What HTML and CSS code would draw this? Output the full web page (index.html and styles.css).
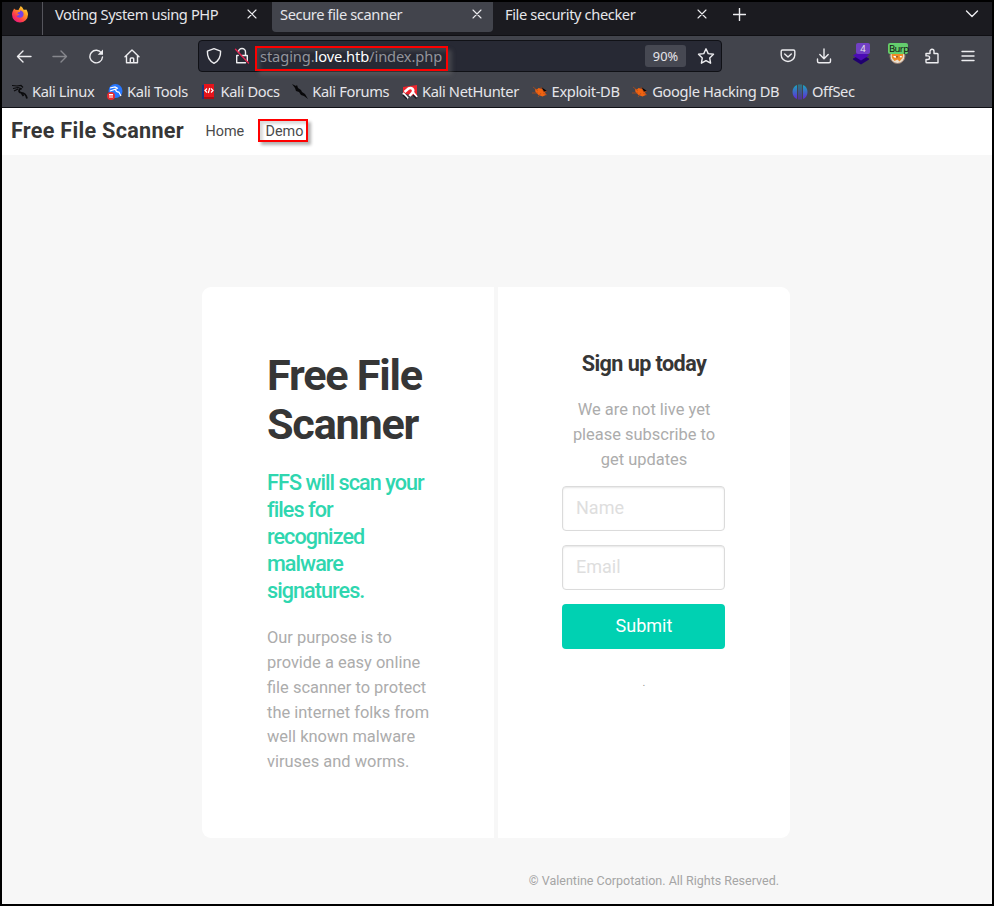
FILE: index.html
```html
<!DOCTYPE html>
<html lang="en">
<head>
<meta charset="utf-8">
<title>Secure file scanner</title>
<link rel="stylesheet" href="styles.css">
</head>
<body>
<div class="window">
  <div class="tabs">
    <div class="pinned">
      <svg width="18" height="18" viewBox="0 0 18 18"><defs><linearGradient id="fx" x1="1" y1="0" x2=".2" y2="1"><stop offset="0" stop-color="#fff44f"/><stop offset=".4" stop-color="#ff9a1f"/><stop offset=".75" stop-color="#ff3750"/><stop offset="1" stop-color="#e31587"/></linearGradient></defs><path fill="url(#fx)" d="M9.6 1C11 2 12 3 12.4 4.4 14 5 15 5 15 4.200C16.500 6 17 7.700 17 9.500A8 8 0 0 1 1 9.500C1 7.500 1.600 6 2.600 4.700L3 3.500 4.500 4.700 7.500 5C8 3.500 9 2.800 9.600 1Z"/><path fill="#7542e5" d="M9 5.500a4 4 0 0 1 3.600 3.500c0 2.300-1.600 3.700-3.600 3.700-1.800 0-3.200-1-3.600-2.300 1 .5 2.200.3 3.200-.8L6.300 8.500c.5-1.100 1.400-1.500 2.700-1.500Z"/></svg>
    </div>
    <div class="tab tab-first"><span>Voting System using PHP</span><svg class="close" viewBox="0 0 10 10"><path d="M1 1l8 8M9 1L1 9"/></svg></div>
    <div class="tab active"><span>Secure file scanner</span><svg class="close" viewBox="0 0 10 10"><path d="M1 1l8 8M9 1L1 9"/></svg></div>
    <div class="tab"><span>File security checker</span><svg class="close" viewBox="0 0 10 10"><path d="M1 1l8 8M9 1L1 9"/></svg></div>
    <svg class="line plus" width="13" height="13" viewBox="0 0 13 13"><path d="M6.500 .5v12M.5 6.500h12"/></svg>
    <svg class="line chevron" width="14" height="8" viewBox="0 0 14 8"><path d="M1.500 1l5.500 5.500L12.500 1"/></svg>
  </div>
  <div class="toolbar">
    <div class="nav">
      <svg class="line" width="16" height="16" viewBox="0 0 16 16"><path d="M15 8.500H1.500M7 3L1.500 8.500 7 14"/></svg>
      <svg class="line dim" width="16" height="16" viewBox="0 0 16 16"><path d="M1 8.500h13.500M9 3L14.500 8.500 9 14"/></svg>
      <svg class="line" width="16" height="16" viewBox="0 0 16 16"><path d="M13.600 5.300A6.300 6.300 0 1 0 14.500 9"/><path class="solid" d="M15 1.500v5.300H9.700Z"/></svg>
      <svg class="line" width="16" height="16" viewBox="0 0 16 16"><path d="M1 8.700L8 2l7 6.700M2.500 7.500v7.300h11V7.500M6.300 14.500v-3.700q0-.8.800-.8h1.800q.8 0 .8.800v3.700"/></svg>
    </div>
    <div class="urlbar">
      <svg class="line" width="16" height="18" viewBox="0 0 16 18"><path d="M8 1.700L14.600 4.200C14.800 10 12.500 14 8 16.300 3.500 14 1.200 10 1.400 4.200Z"/></svg>
      <svg class="line lock" width="16" height="18" viewBox="0 0 16 18"><path d="M4.500 5.500V5a3.500 3.500 0 0 1 7 0v3.500M8 8.500h5.300v5.300M11.500 15.700H2.700V8.500h1.500"/><path class="slash" d="M1.500 2.200L14.500 16"/></svg>
      <div class="url mark">staging.<b>love.htb</b>/index.php</div>
      <div class="zoom">90%</div>
      <svg class="line star" width="18" height="18" viewBox="0 0 18 18"><path d="M9 1.800l2.200 4.800 5.300.7-3.800 3.600.9 5.300L9 13.600 4.400 16.200l.9-5.300L1.500 7.300l5.300-.7Z"/></svg>
    </div>
    <div class="actions">
      <svg class="line" width="16" height="16" viewBox="0 0 16 16"><path d="M2.500 2h11q1.300 0 1.300 1.300V7a6.800 6.500 0 0 1-13.600 0V3.300Q1.200 2 2.500 2ZM4.700 6L8 9l3.300-3"/></svg>
      <svg class="line" width="16" height="16" viewBox="0 0 16 16"><path d="M8 1v9.500M3.800 6.500L8 10.700l4.200-4.200M1.500 11v2.200q0 1.500 1.500 1.500h10q1.500 0 1.500-1.500V11"/></svg>
      <div class="ext"><svg width="18" height="18" viewBox="0 0 18 18"><path fill="#20006f" d="M1 11.500l8-4 8 4v1l-8 5-8-5Z"/><path fill="#4b0bb5" d="M1 8.500l8-5 8 5-8 5Z"/></svg><span class="badge purple">4</span></div>
      <div class="ext"><svg width="18" height="18" viewBox="0 0 18 18"><circle cx="9.500" cy="9" r="7.500" fill="#eadfce" stroke="#96796b"/><path fill="#f08a24" d="M3.500 6h12l-1 5-3 3.500-2-2-3 1.500-2.500-3Z"/><path fill="#fff" d="M5 9h2.500L8.500 10 7 11Zm6.500 0H14l-1 2Z"/><path fill="#a85f25" d="M8 9h2v1.500H8z"/></svg><span class="badge green">Burp</span></div>
      <svg class="line" width="16" height="16" viewBox="0 0 16 16"><path d="M2 5.500h4V3.300a2 2 0 0 1 4 0v2.200h3.200q.8 0 .8.800v8.500H2.800q-.8 0-.8-.8v-2.500h1.800a1.800 1.800 0 0 0 0-3.600H2Z"/></svg>
      <svg class="line" width="16" height="16" viewBox="0 0 16 16"><path d="M2 3.500h12M2 8h12M2 12.500h12"/></svg>
    </div>
  </div>
  <div class="bookmarks">
    <div class="bm"><svg viewBox="0 0 16 16"><path fill="none" stroke="#0b0b0d" stroke-width="1.200" d="M0 1.500l5 .5 4-.5 2 2M1 4.500l5-1 4 1.500M2 7l4-2"/><path fill="none" stroke="#0b0b0d" stroke-width="1.800" d="M9 4.500c-3 1.500-2.500 4 .5 4.300s4.500 1.200 5.500 5.700M9.500 9l2 3"/></svg>Kali Linux</div>
    <div class="bm"><svg viewBox="0 0 16 16"><circle cx="8.500" cy="7" r="7" fill="#2777ff"/><path fill="none" stroke="#fff" stroke-width="1.200" d="M3 4l5-1 3 1.500M3 7l6-2c-1 2 1 3 3 3.200L14 12"/><circle cx="4" cy="12" r="4" fill="#e62a2f"/><path stroke="#fff" d="M2 10.500h4M3 10.500V14M5 10.500V14"/></svg>Kali Tools</div>
    <div class="bm"><svg viewBox="0 0 16 16"><path fill="#19357a" d="M1 1h3v14H1z"/><path fill="#e5141b" d="M3 0h10v15H3z"/><path fill="#aa0c12" d="M3 13h10v2H3z"/><path fill="none" stroke="#fff" stroke-width="1.200" d="M6 4.500l-2 2 2 2M10 4.500l2 2-2 2M8.700 4L7.300 9"/></svg>Kali Docs</div>
    <div class="bm"><svg viewBox="0 0 16 16"><path fill="#08080a" d="M0 0l4 2 1-1 1 3 3 2 1 2 3 2 3 5-4-3-3-1-2-3-3-1-1-3Z"/></svg>Kali Forums</div>
    <div class="bm"><svg viewBox="0 0 16 16"><path fill="#ee252d" d="M1 3L15 1v12L1 9Z"/><path fill="none" stroke="#fff" stroke-width="2.600" d="M2.500 8l4-3.500c3-1.500 6 1 4 4L7.500 12"/><path stroke="#fff" stroke-width="2" d="M1 9l5 5.500M11 8l4 5"/><path stroke="#181820" stroke-width="1.500" d="M1 11l4 4M11 11l3.500 3.500"/></svg>Kali NetHunter</div>
    <div class="bm"><svg viewBox="0 0 16 16"><path fill="#ef6310" d="M3 5l2 .5 1.500-1.500 4 1 2.500 3 1 3-3.500 1.500-4-1.500-3-3Z"/><path stroke="#b84b18" stroke-width=".7" d="M1 3l5 4M0 9h6M6 13l3-4M9 3l3 5 3-1M11 9l4 2"/></svg>Exploit-DB</div>
    <div class="bm"><svg viewBox="0 0 16 16"><path fill="#ef6310" d="M3 5l2 .5 1.500-1.500 4 1 2.500 3 1 3-3.500 1.500-4-1.500-3-3Z"/><path stroke="#b84b18" stroke-width=".7" d="M1 3l5 4M0 9h6M6 13l3-4M9 3l3 5 3-1M11 9l4 2"/></svg>Google Hacking DB</div>
    <div class="bm"><svg viewBox="0 0 16 16"><defs><linearGradient id="os" x2="0" y2="1"><stop stop-color="#18a9bb"/><stop offset="1" stop-color="#6525d5"/></linearGradient></defs><path fill="url(#os)" d="M5 1v14C-1 13-1 3 5 1ZM6.500 .5h1v15h-1zM8.500 .5h1v15h-1zM11 1c6 2 6 12 0 14Z"/></svg>OffSec</div>
  </div>
  <div class="site">
    <nav class="navbar"><strong>Free File Scanner</strong><a class="home">Home</a><a class="demo mark">Demo</a></nav>
    <main>
      <section class="card intro">
        <h1>Free File Scanner</h1>
        <h2>FFS will scan your files for recognized malware signatures.</h2>
        <p>Our purpose is to provide a easy online file scanner to protect the internet folks from well known malware viruses and worms.</p>
      </section>
      <section class="card signup">
        <h3>Sign up today</h3>
        <p>We are not live yet please subscribe to get updates</p>
        <input placeholder="Name" aria-label="Name">
        <input placeholder="Email" aria-label="Email">
        <button>Submit</button>
        <small>.</small>
      </section>
    </main>
    <footer>© Valentine Corpotation. All Rights Reserved.</footer>
  </div>
</div>
</body>
</html>
```
FILE: styles.css
```css
* { box-sizing: border-box; }
body { margin: 0; background: #000; }
svg { flex: none; display: block; }
.window { width: 994px; height: 906px; border: 2px solid #000; overflow: hidden; font: 14.67px/20px "Noto Sans", sans-serif; color: #e6e6ea; white-space: nowrap; }
.tabs { display: flex; height: 34px; background: #1b1b20; border-bottom: 1px solid #101014; letter-spacing: -.39px; }
.pinned { width: 41px; border-right: 1px solid #55555c; padding: 3px 0 0 9px; }
.tab { width: 225px; height: 30px; display: flex; justify-content: space-between; padding: 2px 11px 0 8px; }
.tab-first { width: 229px; padding: 2px 15px 0 12px; }
.active { background: #42444c; border-radius: 0 0 4px 4px; width: 221px; }
.active + .tab { padding-left: 12px; }
.line, .close { fill: none; stroke: #ededf0; stroke-width: 1.4; stroke-linecap: round; stroke-linejoin: round; }
.close { width: 10px; height: 10px; margin-top: 5px; stroke-width: 1.1; }
.dim { opacity: .4; }
.line .solid { fill: #ededf0; stroke: none; }
.line .slash { stroke: #e32450; }
.plus { margin: 6px 0 0 15px; }
.chevron { margin: 8px 13px 0 auto; }
.toolbar { height: 40px; background: #42444c; display: flex; align-items: center; }
.nav { display: flex; gap: 20px; width: 196px; padding-left: 14px; }
.urlbar { width: 524px; height: 32px; border: 1px solid #101116; border-radius: 4px; background: #272934; display: flex; align-items: center; padding-left: 7px; }
.lock { margin: 0 0 0 12px; }
.mark { border: 2px solid #f00; box-shadow: 3px 3px 3px rgba(0,0,0,.3), inset 3px 3px 3px rgba(0,0,0,.25); }
.url { margin: 4px 0 0 5px; width: 193px; height: 25px; padding-left: 3px; line-height: 17px; color: #93949b; letter-spacing: -.1px; }
.url b { font-weight: 400; color: #fff; }
.urlbar .url { box-shadow: 4px 4px 4px rgba(110,110,110,.4), inset 3px 3px 4px rgba(110,110,110,.4); }
.zoom { margin-left: 197px; width: 41px; height: 22px; background: #464852; border-radius: 3px; text-align: center; font-size: 12.8px; line-height: 23px; }
.star { margin-left: 11px; }
.actions { display: flex; gap: 20px; margin-left: 58px; align-items: center; }
.ext { position: relative; width: 16px; height: 18px; }
.badge { position: absolute; top: -4px; left: 4px; width: 14px; height: 11px; font-size: 9.5px; line-height: 11px; text-align: center; border-radius: 2px; }
.purple { background: #7140c4; }
.green { left: 0; width: 20px; background: #64cd6d; color: #111; text-align: left; padding-left: 1px; letter-spacing: -.6px; }
.bookmarks { height: 32px; background: #42444c; border-bottom: 1px solid #101116; display: flex; gap: 12.7px; padding: 5px 0 0 10px; letter-spacing: -.36px; }
.bm { display: flex; gap: 4px; }
.bm svg { width: 16px; height: 16px; margin-top: 3px; }
.site { height: 796px; background: #f7f7f7; font-family: Roboto, sans-serif; color: #363636; }
.navbar { height: 47px; background: #fff; display: flex; align-items: center; padding: 0 0 2px 9px; font-size: 14.4px; color: #4a4a4a; }
.navbar strong { font-size: 21.6px; width: 194.5px; color: #363636; letter-spacing: .28px; }
.home { width: 52.5px; padding-top: 2px; }
.demo { width: 50px; height: 23px; line-height: 21px; padding-left: 5.5px; box-shadow: 3px 3px 3px rgba(0,0,0,.3), inset 3px 3px 3px rgba(0,0,0,.15); }
main { display: flex; gap: 4px; margin: 132px 0 0 200px; height: 551px; white-space: normal; }
.card { width: 292px; padding: 65px; background: #fff; }
.intro { border-radius: 9px 0 0 9px; }
.signup { border-radius: 0 9px 9px 0; text-align: center; padding-right: 64px; padding-left: 64px; }
h1, h2, h3, p { margin: 0; }
h1 { font-size: 43.2px; line-height: 48.6px; letter-spacing: -1.22px; font-weight: 700; }
h2 { margin-top: 20px; font-size: 21.6px; line-height: 27px; letter-spacing: -.95px; font-weight: 500; color: #2fd6af; }
p { font-size: 16.45px; line-height: 24.8px; color: #acacac; }
.intro p { margin-top: 22px; width: 170px; }
h3 { font-size: 21.6px; line-height: 24px; font-weight: 700; letter-spacing: -.58px; }
.signup p { margin: 22px 0 14px; }
input { display: block; width: 163px; height: 45px; margin-bottom: 14px; border: 1px solid #dbdbdb; border-radius: 4px; padding: 0 13px 2px; font: 18px Roboto, sans-serif; box-shadow: inset 0 1px 2px rgba(10,10,10,.1); }
input::placeholder { color: #dedede; opacity: 1; }
button { display: block; width: 163px; height: 45px; padding: 0 0 2px 1px; border: 0; border-radius: 4px; background: #00d1b2; color: #fff; font: 18px Roboto, sans-serif; }
small { display: block; margin-top: 24px; font-size: 10.8px; color: #999; }
footer { width: 777px; margin-top: 33px; text-align: right; font-size: 12.5px; color: #a5a5a5; }
```
